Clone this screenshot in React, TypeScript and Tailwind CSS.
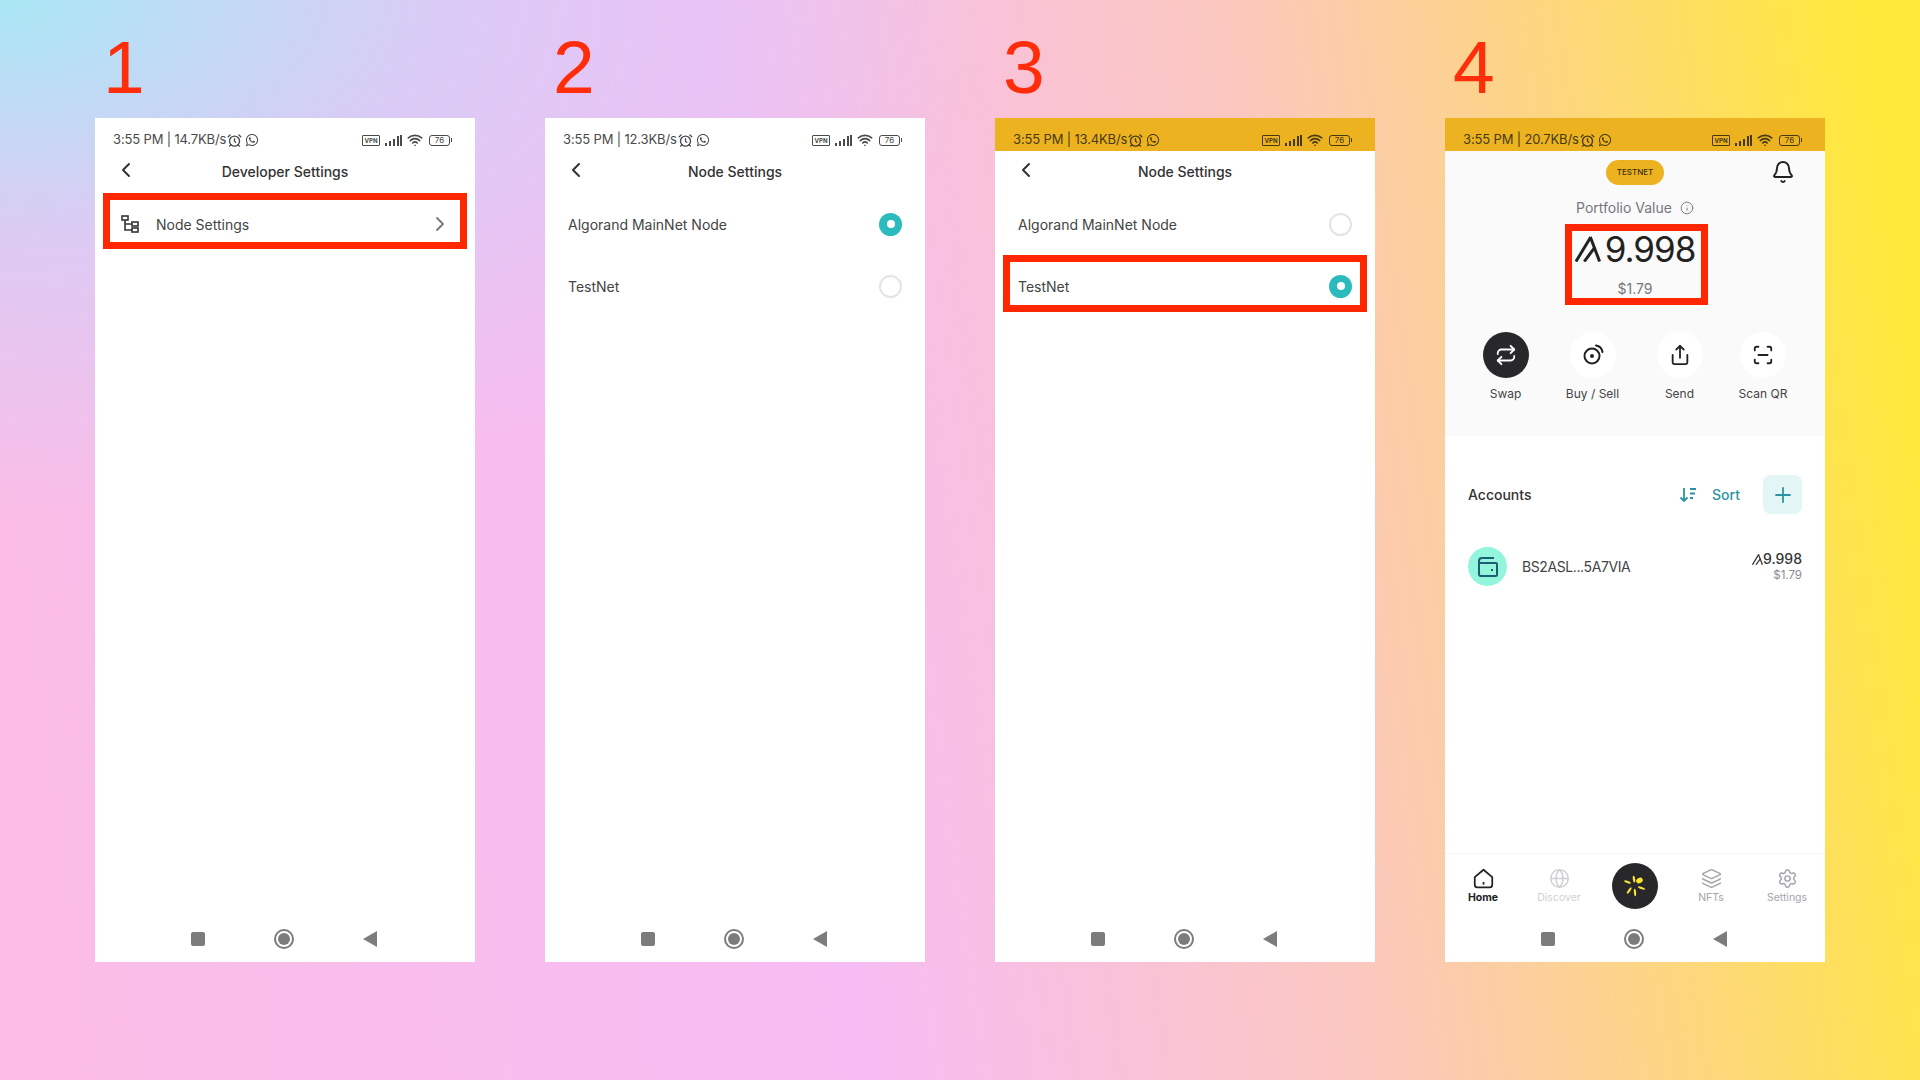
import { AlarmClock, Bell, ChevronLeft, ChevronRight, Globe, Info, Layers, Plus, Repeat, ScanLine, Settings, Share, Wifi } from "lucide-react";
import type { ReactNode } from "react";
import { FaWhatsapp } from "react-icons/fa";

const AlgoMark = ({ className }: { className: string }) => (
	<svg viewBox="0 0 28 28" className={className} fill="none" stroke="currentColor" strokeWidth="3.2">
		<path d="M1 27.5 17 1" />
		<path d="M16.5 1 26.5 27.5" />
		<path d="M10 27.5 21.5 12" />
	</svg>
);

const StatusBar = ({ speed, accent }: { speed: string; accent?: boolean }) => {
	const tone = accent ? "bg-[#edb21f] text-[#463a14]" : "bg-white text-[#4a4a4a]";
	return (
		<div className={`flex h-[33px] items-center justify-between pt-[11px] pr-[23px] pl-[18px] ${tone}`}>
			<div className="flex items-center gap-[1px] text-[13px] tracking-[-0.15px]">
				<span>3:55 PM | {speed}</span>
				<AlarmClock size={15} strokeWidth={2.2} />
				<FaWhatsapp size={14} className="ml-[2px]" />
			</div>
			<div className="flex items-center gap-[5px]">
				<span className="flex h-[11px] w-[18px] items-center justify-center rounded-[1px] border border-current text-[6px] font-bold">VPN</span>
				<svg viewBox="0 0 17 11" className="h-[11px] w-[17px]" fill="currentColor">
					<rect x="0" y="8" width="2" height="3" />
					<rect x="4" y="6" width="2" height="5" />
					<rect x="8" y="4" width="2" height="7" />
					<rect x="12" y="1" width="2" height="10" />
					<rect x="15" y="0" width="2" height="11" />
				</svg>
				<Wifi size={16} strokeWidth={2.4} />
				<span className="ml-[1px] flex items-center">
					<span className="flex h-[11px] w-[21px] items-center justify-center rounded-[3px] border border-current text-[8px]">76</span>
					<span className="ml-[1px] h-[4px] w-[1px] bg-current" />
				</span>
			</div>
		</div>
	);
};

const Header = ({ title }: { title: string }) => (
	<div className="relative flex h-[42px] items-center justify-center pb-[2px] text-[14px] font-medium text-[#333]">
		<ChevronLeft size={24} strokeWidth={2} className="absolute top-[7px] left-[19px]" />
		{title}
	</div>
);

const NavKeys = () => (
	<div className="flex h-[46px] items-center justify-center gap-[69px] pr-[3px]">
		<span className="h-[14px] w-[14px] rounded-[2px] bg-[#7c7c7c]" />
		<span className="flex h-5 w-5 items-center justify-center rounded-full border-2 border-[#7c7c7c]">
			<span className="h-3 w-3 rounded-full bg-[#7c7c7c]" />
		</span>
		<svg viewBox="0 0 14 16" className="h-4 w-[14px]" fill="#7c7c7c">
			<path d="M14 0v16L0 8z" />
		</svg>
	</div>
);

const Phone = ({ label, speed, accent, children }: { label: string; speed: string; accent?: boolean; children: ReactNode }) => (
	<div className="w-[380px]">
		<div className="h-[118px] pt-[25px] pl-[8px] font-['Liberation_Sans',sans-serif] text-[75px] leading-[85px] text-[#ff2d0a]">{label}</div>
		<div className="flex h-[844px] flex-col bg-white">
			<StatusBar speed={speed} accent={accent} />
			{children}
		</div>
	</div>
);

const Highlight = ({ className }: { className: string }) => (
	<div className={`pointer-events-none absolute border-[7px] border-[#ff2600] ${className}`} />
);

const NodeRow = ({ name, selected, boxed }: { name: string; selected?: boolean; boxed?: boolean }) => (
	<div className="relative flex h-[62px] items-center justify-between px-[23px] text-[14px] text-[#444]">
		{name}
		{selected ? (
			<span className="flex h-[23px] w-[23px] items-center justify-center rounded-full bg-[#2bbbbd]">
				<span className="h-2 w-2 rounded-full bg-white" />
			</span>
		) : (
			<span className="h-[23px] w-[23px] rounded-full border-2 border-[#e4e4e4]" />
		)}
		{boxed && <Highlight className="top-0 right-[8px] bottom-[5px] left-[8px]" />}
	</div>
);

const NodeSettings = ({ boxed }: { boxed?: boolean }) => (
	<>
		<Header title="Node Settings" />
		<NodeRow name="Algorand MainNet Node" selected={!boxed} />
		<NodeRow name="TestNet" selected={boxed} boxed={boxed} />
		<div className="flex-1" />
		<NavKeys />
	</>
);

const BuySellIcon = () => (
	<svg viewBox="0 0 24 24" className="h-6 w-6" fill="none" stroke="currentColor" strokeWidth="2" strokeLinecap="round">
		<circle cx="11" cy="13" r="7.5" />
		<circle cx="11" cy="13" r="1" fill="currentColor" />
		<path d="M15 2.5a8 8 0 0 1 6.5 6.5" />
	</svg>
);

const actions = [
	{ label: "Swap", width: "w-[87px]", icon: <Repeat size={22} strokeWidth={2} />, dark: true },
	{ label: "Buy / Sell", width: "w-[87px]", icon: <BuySellIcon /> },
	{ label: "Send", width: "w-[87px]", icon: <Share size={22} strokeWidth={2} /> },
	{ label: "Scan QR", width: "w-[80px]", icon: <ScanLine size={22} strokeWidth={2} /> },
];

const tabs = [
	{ label: "Home", tone: "font-bold text-[#222]" },
	{ label: "Discover", tone: "text-[#d0d0d4]", icon: <Globe size={21} strokeWidth={1.7} /> },
	{ label: "", tone: "" },
	{ label: "NFTs", tone: "text-[#a4a4ac]", icon: <Layers size={21} strokeWidth={1.7} /> },
	{ label: "Settings", tone: "text-[#a4a4ac]", icon: <Settings size={21} strokeWidth={1.7} /> },
];

const HomeIcon = () => (
	<svg viewBox="0 0 24 24" className="h-[21px] w-[21px]" fill="none" stroke="currentColor" strokeWidth="2" strokeLinejoin="round">
		<path d="M2 10.5 12 2l10 8.5V19a3 3 0 0 1-3 3H5a3 3 0 0 1-3-3z" />
		<path d="M12 16v3" />
	</svg>
);

const PetalLogo = () => (
	<svg viewBox="0 0 24 24" className="h-6 w-6" fill="#f9e534">
		<ellipse cx="16.5" cy="6.5" rx="3.4" ry="2.7" transform="rotate(-30 16.5 6.5)" />
		<ellipse cx="11" cy="5.2" rx="1.2" ry="3.4" transform="rotate(-8 11 5.2)" />
		<ellipse cx="4.5" cy="8" rx="1.1" ry="3.6" transform="rotate(-70 4.5 8)" />
		<ellipse cx="6.2" cy="16.5" rx="1.1" ry="3.8" transform="rotate(35 6.2 16.5)" />
		<ellipse cx="12" cy="18.5" rx="1.1" ry="3.8" transform="rotate(-5 12 18.5)" />
		<ellipse cx="18.5" cy="14" rx="1.1" ry="3.8" transform="rotate(-70 18.5 14)" />
	</svg>
);

const Portfolio = () => (
	<>
		<div className="flex h-[285px] flex-col bg-[#fafafa]">
			<div className="relative flex h-[42px] items-center justify-center">
				<span className="flex h-[25px] w-[58px] items-center justify-center rounded-full bg-[#edb21f] text-[8px] font-medium text-[#3a2f10]">TESTNET</span>
				<Bell size={24} strokeWidth={1.9} className="absolute top-[9px] right-[30px] text-[#222]" />
			</div>
			<div className="mt-[4px] flex items-center justify-center gap-[8px] text-[14px] text-[#77777f]">
				Portfolio Value
				<Info size={14} strokeWidth={1.6} />
			</div>
			<div className="relative mt-[6px] flex h-[81px] flex-col items-center">
				<div className="mt-[3px] flex items-center text-[35px] leading-[44px] tracking-[-1px] text-[#222]">
					<AlgoMark className="mr-[4px] h-[26px] w-[26px]" />
					9.998
				</div>
				<div className="mt-[7px] text-[14px] text-[#77777f]">$1.79</div>
				<Highlight className="top-0 left-[120px] h-[81px] w-[143px]" />
			</div>
			<div className="mt-[27px] flex pl-[17px]">
				{actions.map((action) => (
					<div key={action.label} className={`flex flex-col items-center text-[12px] text-[#444] ${action.width}`}>
						<span className={`flex h-[46px] w-[46px] items-center justify-center rounded-full ${action.dark ? "bg-[#28282b] text-white" : "bg-white text-[#222]"}`}>{action.icon}</span>
						<span className="mt-[7px]">{action.label}</span>
					</div>
				))}
			</div>
		</div>
		<div className="flex items-center pt-[39px] pr-[23px] pl-[23px] text-[14px]">
			<span className="flex-1 font-medium text-[#333]">Accounts</span>
			<svg viewBox="0 0 18 16" className="mr-[15px] h-4 w-[18px]" fill="none" stroke="#2d93a4" strokeWidth="1.8">
				<path d="M5 1v13M1.5 10.5 5 14l3.5-3.5M11 2h6M11 6.5h5M11 11h3" />
			</svg>
			<span className="mr-[23px] font-medium text-[#2d93a4]">Sort</span>
			<span className="flex h-[39px] w-[39px] items-center justify-center rounded-lg bg-[#e3f5f5] text-[#2d93a4]">
				<Plus size={24} strokeWidth={1.8} />
			</span>
		</div>
		<div className="mt-[33px] flex items-center pr-[23px] pl-[23px]">
			<span className="flex h-[39px] w-[39px] items-center justify-center rounded-full bg-[#93f5dc]">
				<svg viewBox="0 0 24 24" className="h-6 w-6" fill="none" stroke="#1d5d73" strokeWidth="2">
					<path d="M18 3H6a3 3 0 0 0-3 3v13a2 2 0 0 0 2 2h15a1 1 0 0 0 1-1V9a1 1 0 0 0-1-1H3" />
					<path d="M15 15h2" />
				</svg>
			</span>
			<span className="ml-[15px] flex-1 text-[14px] tracking-[-0.4px] text-[#444]">BS2ASL...5A7VIA</span>
			<div className="flex flex-col items-end">
				<div className="flex items-center text-[14px] leading-[18px] font-medium text-[#333]">
					<AlgoMark className="h-[11px] w-[11px]" />
					9.998
				</div>
				<div className="text-[11.5px] leading-[15px] text-[#8a8a92]">$1.79</div>
			</div>
		</div>
		<div className="flex-1" />
		<div className="flex h-[63px] border-t border-[#f5f5f5] pt-[14px]">
			{tabs.map((tab, index) =>
				index === 2 ? (
					<div key="logo" className="flex w-[76px] justify-center">
						<span className="mt-[-5px] flex h-[46px] w-[46px] items-center justify-center rounded-full bg-[#28282b]">
							<PetalLogo />
						</span>
					</div>
				) : (
					<div key={tab.label} className={`flex w-[76px] flex-col items-center text-[10.5px] ${tab.tone}`}>
						{tab.icon ?? <HomeIcon />}
						<span className="mt-[1px]">{tab.label}</span>
					</div>
				),
			)}
		</div>
		<NavKeys />
	</>
);

export default function App() {
	return (
		<div className="flex h-[1080px] w-[1920px] gap-[70px] overflow-hidden bg-[radial-gradient(ellipse_1000px_520px_at_0_0,#a9e7f5_0%,#c8d4fb99_45%,transparent_100%),linear-gradient(82deg,#fbbde6_0%,#f7bcf3_42%,#fbc7c0_66%,#fdd67e_82%,#ffe93b_97%)] px-[95px] font-['Inter',sans-serif]">
			<Phone label="1" speed="14.7KB/s">
				<Header title="Developer Settings" />
				<div className="relative flex h-[62px] items-center pr-[23px] pl-[26px] text-[14px] text-[#444]">
					<svg viewBox="0 0 18 18" className="h-[18px] w-[18px] text-[#333]" fill="none" stroke="currentColor" strokeWidth="1.6">
						<rect x="1" y="1" width="6" height="4" />
						<rect x="11" y="7" width="6" height="4" />
						<rect x="11" y="13" width="6" height="4" />
						<path d="M4 5v10h7M4 9h7" />
					</svg>
					<span className="ml-[17px] flex-1">Node Settings</span>
					<ChevronRight size={24} strokeWidth={1.8} className="text-[#777]" />
					<Highlight className="top-0 right-[8px] bottom-[6px] left-[8px]" />
				</div>
				<div className="flex-1" />
				<NavKeys />
			</Phone>
			<Phone label="2" speed="12.3KB/s">
				<NodeSettings />
			</Phone>
			<Phone label="3" speed="13.4KB/s" accent>
				<NodeSettings boxed />
			</Phone>
			<Phone label="4" speed="20.7KB/s" accent>
				<Portfolio />
			</Phone>
		</div>
	);
}
